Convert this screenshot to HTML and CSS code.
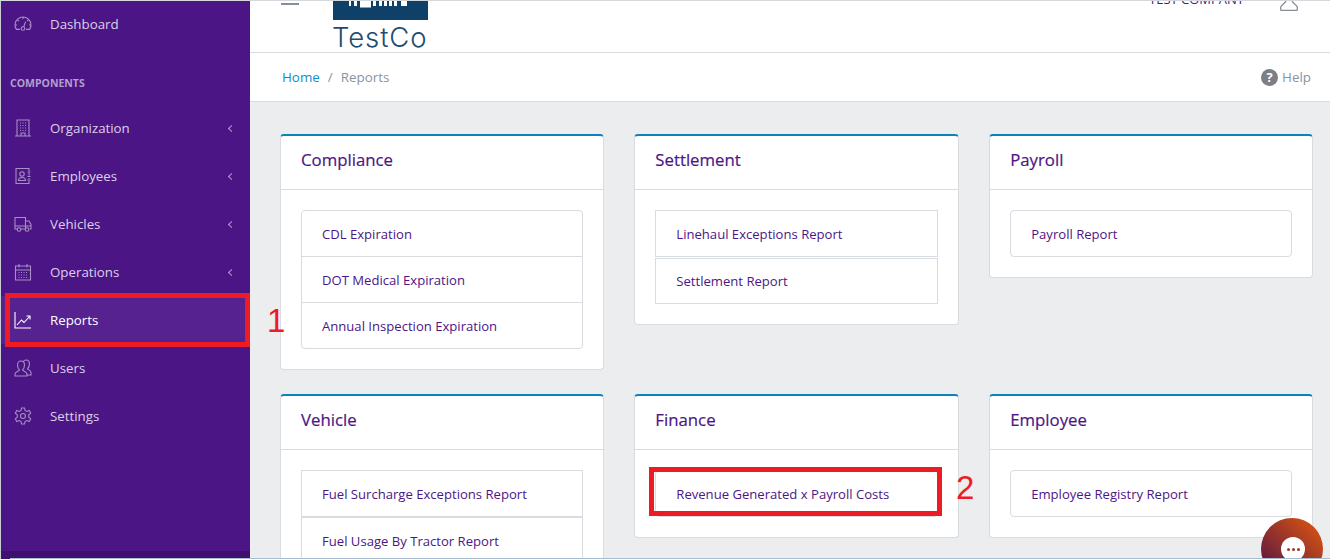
FILE: index.html
```html
<!DOCTYPE html>
<html lang="en">
<head>
<meta charset="utf-8">
<title>Reports</title>
<link rel="stylesheet" href="styles.css">
</head>
<body>
<div class="app">
  <aside class="sidebar">
    <nav class="nav">
      <a class="nav-item nav-first"><svg class="nav-icon" viewBox="0 0 18 18"><path d="M2.2 14.2A8 8 0 1 1 15.8 14.2M1 10h2M15 10h2M3.7 5l1.3 1.2M14.3 5L13 6.2M9 2v2M11.6 6.8L9.6 12"/><circle cx="9" cy="13.5" r="1.8"/><path d="M2 14.4h4M12 14.4h4"/></svg><span>Dashboard</span></a>
      <div class="nav-title">COMPONENTS</div>
      <a class="nav-item"><svg class="nav-icon" viewBox="0 0 18 18"><path d="M3 17V1h12v16M1 17h16M7 17v-3h4v3"/><path class="dots" d="M6 4h1M8.500 4h1M11 4h1M6 6.500h1M8.500 6.500h1M11 6.500h1M6 9h1M8.500 9h1M11 9h1M6 11.500h1M8.500 11.500h1M11 11.500h1"/></svg><span>Organization</span><i class="chev"></i></a>
      <a class="nav-item"><svg class="nav-icon" viewBox="0 0 18 18"><path d="M15 4V1.500H2v15h13V14M15 6v2.500M15 11v1M13.500 5h3M13.500 9.500h3M13.500 13h3"/><circle cx="8" cy="7" r="2.200"/><path d="M4.500 13.500c0-2 1.500-3 3.500-3s3.500 1 3.500 3z"/></svg><span>Employees</span><i class="chev"></i></a>
      <a class="nav-item"><svg class="nav-icon" viewBox="0 0 18 18"><path d="M3 14H1V2.500h10.500V14H7M11.500 6H15l2 3.500V14h-1.500M11.500 14H11M1 11h16"/><circle cx="5" cy="14.500" r="1.800"/><circle cx="13" cy="14.500" r="1.800"/></svg><span>Vehicles</span><i class="chev"></i></a>
      <a class="nav-item"><svg class="nav-icon" viewBox="0 0 18 18"><path d="M1.500 3h15v14h-15zM5 1v3.500M13 1v3.500M1.500 7h15"/><path class="dots" d="M4.500 9.500h1M7 9.500h1M9.500 9.500h1M12 9.500h1M4.500 12h1M7 12h1M9.500 12h1M12 12h1M4.500 14.500h1M7 14.500h1M9.500 14.500h1M12 14.500h1"/></svg><span>Operations</span><i class="chev"></i></a>
      <a class="nav-item active"><svg class="nav-icon" viewBox="0 0 18 18"><path d="M1 1v16h16M3 14l4.500-5 2.500 2.500L16 5M12.500 5H16v3.500"/></svg><span>Reports</span></a>
      <a class="nav-item"><svg class="nav-icon" viewBox="0 0 18 18"><path d="M1 17v-2c0-2 3.500-2.500 4.500-4C4 9.500 3.500 7.500 3.500 6c0-2.500 1.500-4 3.500-4s3.500 1.500 3.500 4c0 1.500-.5 3.500-2 5 1 1.500 4.500 2 4.500 4v2zM9.500 2.500C10 1.500 11 1 12 1c2 0 3.500 1.500 3.500 4 0 1.500-.5 3.300-2 4.800 1 1.200 3.500 1.700 3.500 3.700v2.500h-4"/></svg><span>Users</span></a>
      <a class="nav-item"><svg class="nav-icon" viewBox="0 0 18 18"><path d="M7.500 1h3l.5 2.500 1.800.9 2.400-.9 1.500 2.600-2 1.600v2.600l2 1.600-1.500 2.600-2.400-.9-1.800.9-.5 2.500h-3L7 14.500l-1.800-.9-2.400.9L1.300 11.900l2-1.600V7.700l-2-1.600L2.800 3.500l2.400.9L7 3.500z"/><circle cx="9" cy="9" r="2.500"/></svg><span>Settings</span></a>
    </nav>
    <div class="sidebar-foot"></div>
  </aside>
  <main class="main">
    <header class="topbar">
      <div class="burger"></div>
      <div class="brand">
        <svg class="brand-mark" viewBox="0 0 95 19" preserveAspectRatio="none"><rect width="95" height="19" fill="#0f4168"/><path fill="#fff" d="M16 0h2v5h-2zM21 0h3v5h-3zM27 0h11v6.500H27zM40 0h3v5h-3zM46 0h3v5h-3zM51 0h3v5h-3zM56 0h3v5h-3zM61 0h3v5h-3zM68 0h6v5h-6z"/></svg>
        <span class="brand-name">TestCo</span>
      </div>
      <div class="company">TEST COMPANY</div>
      <svg class="user-icon" viewBox="0 0 18 10"><path d="M.7 9.500V6.500C.7 4 5 2.500 6 0M17.300 9.500V6.500C17.300 4 13 2.500 12 0M.7 9.500h16.600"/></svg>
    </header>
    <div class="crumbs">
      <a class="crumb-link">Home</a><span class="crumb-sep">/</span><span class="crumb-now">Reports</span>
      <span class="help"><span class="help-icon">?</span>Help</span>
    </div>
    <section class="grid">
      <article class="card"><h2>Compliance</h2><div class="card-body"><ul class="list">
        <li>CDL Expiration</li><li>DOT Medical Expiration</li><li>Annual Inspection Expiration</li></ul></div></article>
      <article class="card"><h2>Settlement</h2><div class="card-body"><ul class="list split apart">
        <li>Linehaul Exceptions Report</li><li>Settlement Report</li></ul></div></article>
      <article class="card"><h2>Payroll</h2><div class="card-body"><ul class="list">
        <li>Payroll Report</li></ul></div></article>
      <article class="card"><h2>Vehicle</h2><div class="card-body"><ul class="list split">
        <li>Fuel Surcharge Exceptions Report</li><li>Fuel Usage By Tractor Report</li></ul></div></article>
      <article class="card"><h2>Finance</h2><div class="card-body"><ul class="list">
        <li>Revenue Generated x Payroll Costs</li></ul></div></article>
      <article class="card"><h2>Employee</h2><div class="card-body"><ul class="list">
        <li>Employee Registry Report</li></ul></div></article>
    </section>
  </main>
</div>
<div class="mark mark-one"></div><div class="mark-num num-one">1</div>
<div class="mark mark-two"></div><div class="mark-num num-two">2</div>
<div class="chat"><div class="chat-bubble"><b></b><b></b><b></b></div></div>
<div class="edge-bottom"></div>
</body>
</html>
```
FILE: styles.css
```css
* { box-sizing: border-box; }
html, body { margin: 0; height: 559px; overflow: hidden; }
body { font-family: "Open Sans", "Noto Sans", sans-serif; font-size: 13px; color: #4c1586; background: #ebedef; }
.app { display: flex; height: 559px; border-left: 1px solid #c8ced3; border-top: 1px solid #d5d8dc; }
.sidebar { width: 249px; flex: none; background: #4c1586; display: flex; flex-direction: column; }
.nav { flex: 1; display: flex; flex-direction: column; }
.nav-item { height: 48px; display: flex; align-items: center; padding-left: 13px; color: #dcd0e8; font-size: 13.300px; flex: none; }
.nav-first { height: 47px; padding-bottom: 1px; }
.nav-item span { margin-left: 18px; flex: 1; }
.nav-icon { width: 18px; height: 18px; fill: none; stroke: #a78fc3; stroke-width: 1.100; flex: none; }
.nav-title { height: 56px; padding-top: 25px; padding-left: 9px; font-size: 10.500px; font-weight: 700; color: #b39fce; line-height: 20px; }
.chev { width: 5px; height: 5px; border-left: 1.500px solid #b39fce; border-bottom: 1.500px solid #b39fce; transform: rotate(45deg); margin-right: 16px; }
.active { background: #562290; color: #fff; }
.active .nav-icon { stroke: #fff; }
.sidebar-foot { height: 8px; background: #3f1070; flex: none; }
.main { flex: 1; min-width: 0; display: flex; flex-direction: column; }
.topbar { height: 52px; flex: none; background: #fff; border-bottom: 1px solid #d8dbe0; display: flex; align-items: flex-start; overflow: hidden; padding-left: 31px; }
.burger { width: 18px; height: 2px; background: #8a8f96; margin-top: 2px; flex: none; }
.brand { margin-left: 34px; width: 96px; flex: none; display: flex; flex-direction: column; }
.brand-mark { width: 95px; height: 19px; flex: none; display: block; }
.brand-name { font-family: Inter, sans-serif; font-size: 27.500px; line-height: 29px; margin: 3px 0 0 -1px; letter-spacing: .9px; color: #1f4c70; font-weight: 300; white-space: nowrap; }
.company { margin-left: 720px; width: 100px; margin-top: -12px; line-height: 20px; font-size: 13px; color: #4c1586; white-space: nowrap; flex: none; }
.user-icon { width: 18px; height: 10px; margin-left: 31px; fill: none; stroke: #8a8f96; stroke-width: 1.300; flex: none; }
.crumbs { height: 49px; flex: none; background: #fff; border-bottom: 1px solid #d8dbe0; display: flex; align-items: center; padding: 0 19px 0 32px; font-size: 13.400px; }
.crumb-link { color: #0e8ec9; }
.crumb-sep { color: #8a93a2; margin: 0 8px; }
.crumb-now { color: #8a93a2; flex: 1; }
.help { color: #8a93a2; display: flex; align-items: center; }
.help-icon { width: 17px; height: 17px; border-radius: 50%; background: #7d7f87; margin-right: 4px; color: #fff; font-size: 13px; font-weight: 700; line-height: 17px; text-align: center; }
.grid { flex: 1; display: grid; grid-template-columns: 323.800px 324.400px 1fr; grid-auto-rows: min-content; column-gap: 30.500px; row-gap: 24px; padding: 32px 17px 0 30px; align-items: start; overflow: hidden; }
.card { background: #fff; border: 1px solid #d8dbe0; border-top: 2px solid #0b84bb; border-radius: 4px; }
.card h2 { margin: 0; height: 54px; padding: 0 20px 6px; display: flex; align-items: center; border-bottom: 1px solid #d8dbe0; font-size: 16.800px; font-weight: 500; -webkit-text-stroke: .2px #4c1586; color: #4c1586; }
.card-body { padding: 20px; }
.list { list-style: none; margin: 0; padding: 0; border: 1px solid #d8dbe0; border-radius: 4px; }
.list li { height: 45px; display: flex; align-items: center; padding: 1px 20px 0; font-size: 13.100px; color: #4c1586; white-space: nowrap; }
.list li + li { height: 46px; border-top: 1px solid #d8dbe0; padding-top: 1px; }
.split { border: 0; }
.split li, .split li + li { height: 47px; padding-top: 1px; border: 1px solid #d8dbe0; border-radius: 0; }
.apart li + li { height: 46px; margin-top: 1px; padding-top: 0; }
.mark { position: absolute; border: 5px solid #ed1c24; }
.mark-one { left: 5px; top: 293px; width: 245px; height: 54px; }
.mark-two { left: 649px; top: 467px; width: 293px; height: 49px; }
.mark-num { position: absolute; font-family: "Liberation Sans", sans-serif; font-size: 33px; line-height: 36px; color: #ed1c24; }
.num-one { left: 267px; top: 303px; }
.num-two { left: 956px; top: 470px; }
.chat { position: absolute; left: 1261px; top: 518px; width: 62px; height: 62px; border-radius: 50%; background: linear-gradient(45deg, #4c0f48, #e2590d); }
.chat-bubble { position: absolute; left: 20px; top: 19px; width: 24px; height: 24px; border-radius: 50%; background: #fff; display: flex; align-items: center; justify-content: center; gap: 2px; }
.chat-bubble b { width: 3px; height: 3px; border-radius: 50%; background: #9a3a2a; }
.edge-bottom { position: absolute; left: 10px; right: 0; top: 558px; height: 1px; background: #a9bbd0; }
```
